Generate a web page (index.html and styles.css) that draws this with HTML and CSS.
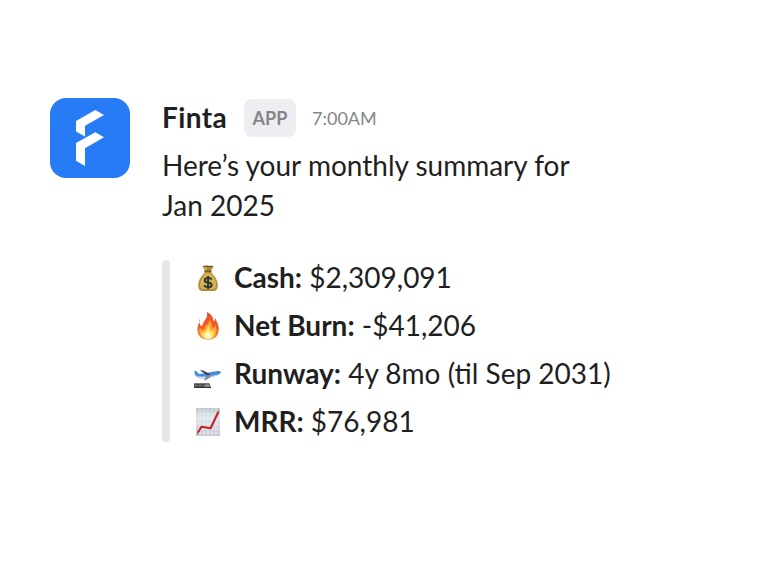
FILE: index.html
```
<!DOCTYPE html>
<html lang="en">
<head>
    <meta charset="UTF-8">
    <meta name="viewport" content="width=device-width, initial-scale=1.0">
    <title>Finta monthly summary</title>
    <link rel="stylesheet" href="styles.css">
</head>
<body>
    <div class="message">
        <svg class="avatar" viewBox="0 0 80 80" aria-label="Finta">
            <rect width="80" height="80" rx="16" fill="#277bf5"/>
            <path fill="#fff" d="M26 23 45.3 12 54 17 35 27.8V38.5L26 33.5zM26 45 45.3 34.2 54 39.3 35 50.3V68L26 62.7z"/>
        </svg>

        <div class="content">
            <div class="header">
                <span class="name">Finta</span>
                <span class="badge">APP</span>
                <span class="time">7:00AM</span>
            </div>

            <p class="intro">Here’s your monthly summary for<br>Jan 2025</p>

            <div class="summary">
                <ul class="stats">
                    <li>
                        <!-- Money bag -->
                        <svg class="icon" viewBox="0 0 28 28">
                            <path fill="#b18a3e" d="M8.5 1.8 11 2.5 13 1.3 15 2.2 19.8 1.7 17.2 6.5Q17 9 20.2 12Q23.7 16 23.7 21.5Q23.7 27 19 27H9Q4.2 27 4.2 21.5Q4.2 16 8 12Q11 9 10.8 6.5z"/>
                            <path fill="#d7b351" d="M11 9.2H17L20 14Q22.2 17.3 22 21.5Q22 24.8 18.5 25H9.5Q6 25 6 21Q6 16.8 8.8 14z"/>
                            <path fill="#e6cb72" d="M10.4 12.5Q7 16 7.2 20Q8.4 15.8 11.5 12zM9.8 2.8 13 2.2 12.3 6.2z"/>
                            <path fill="none" stroke="#765822" stroke-width="1.5" d="M10.5 7.3H17.3M9.2 2.4H18.5"/>
                            <path fill="none" stroke="#303832" stroke-width="2" d="M17.7 15.6Q16.8 14 14 14Q10.7 14 10.7 16.2Q10.7 18 14 18.6Q17.7 19.2 17.7 21.2Q17.7 23.2 14 23.2Q11 23.2 10 21.3M14.1 12V25.2"/>
                        </svg>
                        <span><b>Cash:</b> $2,309,091</span>
                    </li>
                    <li>
                        <!-- Fire -->
                        <svg class="icon" viewBox="0 0 28 28">
                            <defs>
                                <linearGradient id="flame" x1="0" y1="0" x2="0" y2="1">
                                    <stop offset="0" stop-color="#ed4e2b"/>
                                    <stop offset=".55" stop-color="#f45d27"/>
                                    <stop offset="1" stop-color="#fa9140"/>
                                </linearGradient>
                            </defs>
                            <path fill="url(#flame)" d="M13 0Q18.5 2.7 19.3 7.5Q19.5 9.5 20.1 9.2Q21.2 8.8 21.4 5.7Q22.3 9 23.8 12Q25 14.5 24.8 18Q24.4 27.5 14 27.8Q3.7 27.4 3.3 17.5Q3.2 13 5.6 10.2L6.7 14Q8.1 14.6 9 11.8Q9.5 9.5 11.9 6.8Q13.7 4 13 0z"/>
                            <path fill="#f46a35" d="M6.4 6.8Q4.3 8.2 4.7 10Q5.7 9.4 6.4 6.8z"/>
                            <path fill="#fca93a" d="M15.2 7.2Q18.3 13 18.5 17L21.5 13.5Q22.8 17 22.3 20.5Q21.2 27.2 14 27.4Q6.5 27 5.3 20Q5.2 17.8 6 15.8L8.2 18.3Q11 17.5 11.4 14Q15.8 11.5 15.2 7.2z"/>
                            <path fill="#fde458" d="M14 13.2Q16 16.4 17.3 19.4L19.8 18.5Q21.4 26.4 14 27Q7.3 26.5 7.8 20L10 20.5Q13.8 17.5 14 13.2z"/>
                            <path fill="#fff6cf" d="M14.2 18.8Q18.2 23.2 17.2 25.5Q16.5 27 14.2 27Q11.3 27 10.8 24.8Q10.8 22.5 14.2 18.8z"/>
                        </svg>
                        <span><b>Net Burn:</b> -$41,206</span>
                    </li>
                    <li>
                        <!-- Departing plane over a runway -->
                        <svg class="icon" viewBox="0 0 28 28">
                            <path fill="#478dde" d="M.1 10.8 2 10.9 5.2 14Q14 12.5 20 11.5Q26 10.7 27.3 12.1Q26 14.8 20.3 16.2Q12 18.3 5.3 17.8Q2 17.3 1.2 15.3z"/>
                            <path fill="#c6d6ea" d="M1.1 14.7Q3 16.6 8 16.6Q16 16.7 24.5 14.5Q20.6 17 14.8 18.2Q7.5 19.4 3.6 17.7z"/>
                            <path fill="#36404f" d="M6 10.4 8.6 10.2 16.5 14.3 13.4 15.2z"/>
                            <path fill="#858d99" d="M10.1 16.1 18.8 15.2 12.3 20.1 9.7 20.3 12.2 17z"/>
                            <path fill="#28476f" d="M23.8 11.2 25.5 11.4 25 12.2 23.5 12z"/>
                            <path fill="#4c4c4c" d="M0 23.2H15.5L17 28H0z"/>
                            <path fill="#8f8f8f" d="M11 24.3H15L15.9 27H11z"/>
                            <path stroke="#aaa" stroke-width=".7" d="M1 25.7H3.5M5 25.7H7.5M9 25.7H10.5"/>
                            <path stroke="#242424" stroke-width=".8" d="M0 27.6H17"/>
                        </svg>
                        <span><b>Runway:</b> 4y 8mo (til Sep 2031)</span>
                    </li>
                    <li>
                        <!-- Rising chart -->
                        <svg class="icon" viewBox="0 0 28 28">
                            <defs>
                                <linearGradient id="sheet" x1="0" y1="0" x2="0" y2="1">
                                    <stop offset="0" stop-color="#bdc8ce"/>
                                    <stop offset=".35" stop-color="#dce6ed"/>
                                    <stop offset="1" stop-color="#c5cbd0"/>
                                </linearGradient>
                            </defs>
                            <path fill="url(#sheet)" d="M2 0H26V28H2z"/>
                            <path fill="none" stroke="#f0f5f8" stroke-width=".5" d="M6 1V27M10 1V27M14 1V27M18 1V27M22 1V27M3 6H25M3 11H25M3 16H25M3 21H25M3 25H25"/>
                            <path fill="none" stroke="#b38b65" stroke-width="1.6" d="M3 26.5 4.5 24M23.4 5.5 25 2.3"/>
                            <path fill="none" stroke="#c91f25" stroke-width="2.1" stroke-linejoin="round" d="M3.9 24.5 7.5 18.7 16.6 20.2 24.3 4"/>
                        </svg>
                        <span><b>MRR:</b> $76,981</span>
                    </li>
                </ul>
            </div>
        </div>
    </div>
</body>
</html>
```
FILE: styles.css
```
body {
    font-family: Lato, sans-serif;
    background-color: #ffffff;
    color: #1f1f1f;
    margin: 0;
    font-size: 28px;
    line-height: 40px;
}

.message {
    display: flex;
    align-items: flex-start;
    gap: 32px;
    padding: 98px 50px 0;
}

.avatar {
    width: 80px;
    height: 80px;
    flex-shrink: 0;
}

.header {
    display: flex;
    align-items: center;
    height: 40px;
}

.name {
    font-weight: bold;
    letter-spacing: 0.4px;
    width: 82px;
    padding-bottom: 2px;
}

.badge {
    width: 52px;
    height: 38px;
    line-height: 39px;
    border-radius: 8px;
    background-color: #eeedf2;
    color: #868686;
    font-size: 18px;
    font-weight: bold;
    text-align: center;
}

.time {
    margin-left: 16px;
    color: #868686;
    font-size: 18px;
}

.intro {
    margin: 7px 0 35px;
}

.summary {
    display: flex;
    gap: 24px;
    height: 182px;
}

.summary::before {
    content: "";
    width: 8px;
    border-radius: 4px;
    background-color: #e6e6e6;
}

.stats {
    display: flex;
    flex-direction: column;
    gap: 8px;
    list-style-type: none;
    margin: -2px 0 0;
    padding: 0;
}

.stats li {
    display: flex;
    align-items: center;
    gap: 12px;
    height: 40px;
    white-space: nowrap;
}

.stats span {
    padding-bottom: 2px;
}

.icon {
    width: 28px;
    height: 28px;
    flex-shrink: 0;
}
```
